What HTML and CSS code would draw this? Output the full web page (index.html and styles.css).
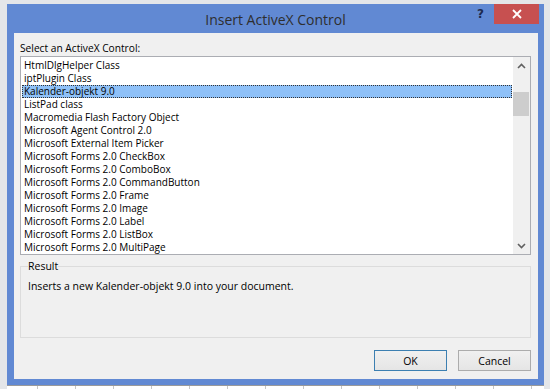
FILE: index.html
```html
<!DOCTYPE html>
<html>
<head>
<meta charset="utf-8">
<link rel="stylesheet" href="styles.css">
</head>
<body>
<div class="screen">
  <div class="window">
    <div class="titlebar">
      <div class="title">Insert ActiveX Control</div>
      <div class="controls">
        <span class="help">?</span>
        <span class="close"><svg width="10" height="10" viewBox="0 0 10 10"><path d="M1 1L9 9M9 1L1 9" stroke="#fff" stroke-width="1.8"/></svg></span>
      </div>
    </div>
    <div class="client">
      <div class="label">Select an ActiveX Control:</div>
      <div class="listbox">
        <ul class="items">
          <li>HtmlDlgHelper Class</li>
          <li>iptPlugin Class</li>
          <li class="selected">Kalender-objekt 9.0</li>
          <li>ListPad class</li>
          <li>Macromedia Flash Factory Object</li>
          <li>Microsoft Agent Control 2.0</li>
          <li>Microsoft External Item Picker</li>
          <li>Microsoft Forms 2.0 CheckBox</li>
          <li>Microsoft Forms 2.0 ComboBox</li>
          <li>Microsoft Forms 2.0 CommandButton</li>
          <li>Microsoft Forms 2.0 Frame</li>
          <li>Microsoft Forms 2.0 Image</li>
          <li>Microsoft Forms 2.0 Label</li>
          <li>Microsoft Forms 2.0 ListBox</li>
          <li>Microsoft Forms 2.0 MultiPage</li>
        </ul>
        <div class="scrollbar">
          <div class="arrow"><svg width="9" height="6" viewBox="0 0 9 6"><path d="M1 5L4.5 1.5L8 5" fill="none" stroke="#606060" stroke-width="1.6"/></svg></div>
          <div class="track-top"></div>
          <div class="thumb"></div>
          <div class="track"></div>
          <div class="arrow"><svg width="9" height="6" viewBox="0 0 9 6"><path d="M1 1L4.5 4.5L8 1" fill="none" stroke="#606060" stroke-width="1.6"/></svg></div>
        </div>
      </div>
      <fieldset class="result">
        <legend>Result</legend>
        <p>Inserts a new Kalender-objekt 9.0 into your document.</p>
      </fieldset>
      <div class="buttons">
        <button class="btn default">OK</button>
        <button class="btn">Cancel</button>
      </div>
    </div>
  </div>
  <div class="grid"></div>
</div>
</body>
</html>
```
FILE: styles.css
```css
* { box-sizing: border-box; }
html, body { margin: 0; padding: 0; }
body {
  width: 550px;
  height: 389px;
  overflow: hidden;
  background: #e4e6e9;
  font-family: "Open Sans", "Noto Sans", sans-serif;
  font-size: 10px;
  color: #000;
}
.screen {
  width: 550px;
  height: 389px;
  padding-top: 4px;
  display: flex;
  flex-direction: column;
}
.window {
  margin-left: 7px;
  width: 537px;
  height: 381px;
  background: #6189d3;
  padding: 0 6px 6px 7px;
  display: flex;
  flex-direction: column;
}
.titlebar {
  height: 29px;
  display: grid;
  margin: 0 -6px 0 -7px;
}
.title, .controls { grid-area: 1 / 1; }
.title {
  text-align: center;
  font-size: 14px;
  line-height: 29px;
  color: #2e2e2e;
  padding-top: 1px;
}
.controls {
  justify-self: end;
  align-self: start;
  display: flex;
  align-items: flex-start;
  margin-right: 5px;
}
.help {
  font-family: "DejaVu Sans", sans-serif;
  font-weight: bold;
  font-size: 12px;
  color: #1d2a4e;
  width: 22px;
  padding-left: 5px;
  line-height: 20px;
  text-align: left;
}
.close {
  width: 45px;
  height: 20px;
  background: #c75050;
  display: flex;
  align-items: center;
  justify-content: center;
}
.client {
  flex: 1;
  background: #f0f0f0;
  padding: 8px 7px 8px 6px;
  display: flex;
  flex-direction: column;
}
.label {
  line-height: 14px;
  height: 15px;
  font-size: 10.2px;
}
.listbox {
  height: 199px;
  border: 1px solid #abadb3;
  background: #fff;
  display: flex;
}
.items {
  flex: 1;
  list-style: none;
  margin: 0;
  padding: 2px 0 0 1px;
  overflow: hidden;
}
.items li {
  height: 13px;
  line-height: 13px;
  padding-left: 2px;
  white-space: nowrap;
}
.items li.selected {
  background: #8fc1f8;
  outline: 1px dotted #333;
  outline-offset: -1px;
}
.scrollbar {
  width: 17px;
  background: #f0f0f0;
  display: flex;
  flex-direction: column;
  margin-left: 1px;
}
.arrow {
  height: 17px;
  display: flex;
  align-items: center;
  justify-content: center;
}
.track-top { height: 18px; }
.thumb {
  height: 24px;
  background: #cdcdcd;
  margin: 0 1px 0 0;
}
.track { flex: 1; }
.result {
  margin: 4px 0 0 0;
  padding: 2px 7px 0 7px;
  border: 1px solid #dcdcdc;
  height: 79px;
  min-width: 0;
}
.result legend {
  padding: 0;
  margin-left: 0;
  line-height: 14px;
  font-size: 10.5px;
}
.result p {
  margin: 4px 0 0 0;
  line-height: 14px;
  font-size: 10.5px;
}
.buttons {
  display: flex;
  justify-content: flex-end;
  gap: 11px;
  margin-top: auto;
}
.btn {
  width: 73px;
  height: 21px;
  font-family: inherit;
  font-size: 10.5px;
  color: #000;
  border: 1px solid #acacac;
  background: linear-gradient(#f0f0f0, #e5e5e5);
  padding: 0;
  border-radius: 0;
}
.btn.default {
  border-color: #3c7fb1;
}
.grid {
  margin-top: 0;
  height: 4px;
  margin-left: 7px;
  width: 537px;
  border-top: 1px solid #9a9a9a;
  background-color: #fff;
  background-image: repeating-linear-gradient(90deg, transparent 0 30px, #c6c6c6 30px 31px, transparent 31px 38px);
}
```
